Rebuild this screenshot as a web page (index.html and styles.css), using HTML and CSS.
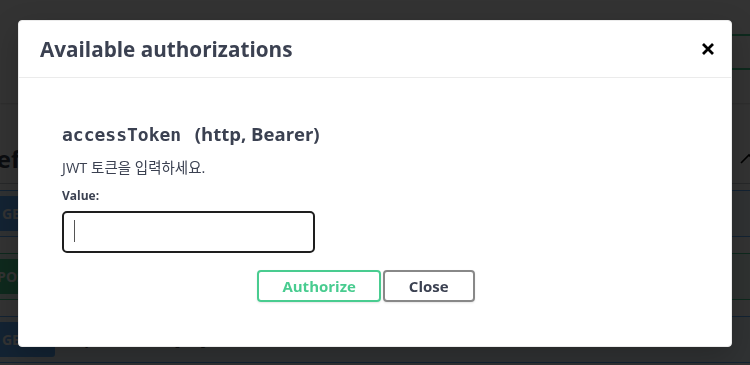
FILE: index.html
```html
<!DOCTYPE html>
<html lang="ko">
<head>
    <meta charset="UTF-8">
    <meta name="viewport" content="width=device-width, initial-scale=1.0">
    <title>Swagger UI</title>
    <link rel="stylesheet" href="styles.css">
</head>

<!--------------------------------------- #PAGE (behind the dialog) -------------------------------->

<body>
    <div class="page">
        <section class="scheme-container">
            <button class="btn-authorize">Authorize</button>
        </section>

        <div class="wrapper">
            <h3 class="opblock-tag">
                <span>Default</span>
                <svg class="arrow" width="20" height="20" viewBox="0 0 20 20">
                    <path d="M2 14 L10 6 L18 14" fill="none" stroke="#000" stroke-width="1.6"/>
                </svg>
            </h3>

            <div class="opblock get">
                <span class="method">GET</span>
                <span class="path">/api/users</span>
            </div>
            <div class="opblock post">
                <span class="method">POST</span>
                <span class="path">/api/auth/login</span>
            </div>
            <div class="opblock get">
                <span class="method">GET</span>
                <span class="path">/api/users/{id}</span>
            </div>
        </div>
    </div>

    <div class="backdrop"></div>

    <!--------------------------------------- #DIALOG -------------------------------->

    <div class="modal">
        <div class="modal-header">
            <h3>Available authorizations</h3>
            <button class="close-modal" aria-label="Close">
                <svg width="12" height="12" viewBox="0 0 12 12">
                    <path d="M1 1 L11 11 M11 1 L1 11" stroke="#000" stroke-width="2.8"/>
                </svg>
            </button>
        </div>

        <div class="modal-body">
            <h4><code>accessToken</code>&nbsp;&nbsp;(http, Bearer)</h4>
            <p class="desc">JWT 토큰을 입력하세요.</p>
            <label class="value-label" for="token">Value:</label>
            <div class="field">
                <input id="token" type="text">
            </div>

            <div class="auth-btn-wrapper">
                <button class="btn authorize">Authorize</button>
                <button class="btn btn-done">Close</button>
            </div>
        </div>
    </div>
</body>
</html>
```

FILE: styles.css
```css
body {
    margin: 0;
    background-color: #fff;
    font-family: "Open Sans", "Noto Sans", sans-serif;
    overflow: hidden;
}

/* page behind the dialog */
.page {
    width: 750px;
    height: 365px;
    overflow: hidden;
}
.scheme-container {
    height: 103px;
    box-sizing: border-box;
    padding-top: 34px;
    background-color: #fff;
    box-shadow: 0 1px 2px 0 rgba(0, 0, 0, 0.15);
    display: flex;
    justify-content: flex-end;
    margin-right: -94px;
}
.btn-authorize {
    height: 36px;
    padding: 0 23px;
    border: 2px solid #49cc90;
    border-radius: 4px;
    background: transparent;
    color: #49cc90;
    font: 700 14px "Open Sans", sans-serif;
}
.wrapper {
    width: 810px;
    margin-left: -31px;
    padding-top: 28px;
}
.opblock-tag {
    display: flex;
    align-items: center;
    justify-content: space-between;
    margin: 0 0 6px;
    padding: 10px 20px 6px 10px;
    font: 700 24px/36px "Open Sans", sans-serif;
    color: #3b4151;
    border-bottom: 1px solid rgba(59, 65, 81, 0.3);
}
.opblock {
    display: flex;
    align-items: center;
    gap: 10px;
    height: 47px;
    box-sizing: border-box;
    padding: 5px;
    margin-bottom: 16px;
    border: 1px solid;
    border-radius: 4px;
}
.opblock.get {
    background-color: rgba(97, 175, 254, 0.1);
    border-color: #61affe;
}
.opblock.post {
    background-color: rgba(73, 204, 144, 0.1);
    border-color: #49cc90;
}
.method {
    width: 80px;
    height: 35px;
    line-height: 35px;
    border-radius: 3px;
    text-align: center;
    color: #fff;
    font-weight: 700;
    font-size: 14px;
}
.get .method {
    background-color: #61affe;
}
.post .method {
    background-color: #49cc90;
}
.path {
    font: 600 16px "DejaVu Sans Mono", monospace;
    color: #3b4151;
}
.backdrop {
    position: fixed;
    inset: 0;
    background-color: rgba(0, 0, 0, 0.8);
}

/* dialog */
.modal {
    position: absolute;
    top: 20px;
    left: 18px;
    width: 714px;
    height: 327px;
    box-sizing: border-box;
    background-color: #fff;
    border: 1px solid #ebebeb;
    border-radius: 4px;
    box-shadow: 0 10px 30px 0 rgba(0, 0, 0, 0.2);
    color: #3b4151;
    font-family: "Open Sans", "Noto Sans CJK KR", sans-serif;
}
.modal-header {
    height: 57px;
    box-sizing: border-box;
    display: flex;
    align-items: center;
    padding: 0 15px 0 21px;
    border-bottom: 1px solid #ebebeb;
}
.modal-header h3 {
    flex: 1;
    margin: 0;
    font-size: 20.7px;
    font-weight: 700;
}
.close-modal {
    border: none;
    background: none;
    padding: 0;
    width: 12px;
    height: 12px;
    margin-right: 2px;
    display: flex;
}
.modal-body {
    padding: 44px 24px 0 43px;
}
.modal-body h4 {
    margin: 0 0 12px;
    font-size: 18.5px;
    line-height: 24px;
    font-weight: 700;
}
.modal-body code {
    font-family: "DejaVu Sans Mono", monospace;
    font-size: 18px;
    margin-right: 4px;
}
.desc {
    margin: 0 0 11px;
    font-size: 14.5px;
    line-height: 18px;
}
.value-label {
    display: block;
    font-size: 12px;
    line-height: 16px;
    font-weight: 700;
}
.field {
    position: relative;
    margin-top: 7px;
    width: 253px;
}
.field input {
    display: block;
    width: 253px;
    height: 42px;
    box-sizing: border-box;
    border: 2px solid #1e1e1e;
    border-radius: 5px;
    outline: none;
}
/* text caret of the focused input */
.field::after {
    content: "";
    position: absolute;
    left: 12px;
    top: 9px;
    width: 1px;
    height: 22px;
    background-color: #555;
}
.auth-btn-wrapper {
    display: flex;
    justify-content: center;
    margin: 17px -24px 0 -43px;
}
.btn {
    height: 32px;
    padding: 0 24px;
    border: 2px solid #888;
    border-radius: 4px;
    background: transparent;
    color: #3b4151;
    font: 700 15px "Open Sans", sans-serif;
    box-shadow: 0 1px 2px rgba(0, 0, 0, 0.1);
}
.btn.authorize {
    border-color: #49cc90;
    color: #49cc90;
    margin-right: 2px;
    padding: 0 23px;
}
.btn-done {
    margin-right: 18px;
}
```
